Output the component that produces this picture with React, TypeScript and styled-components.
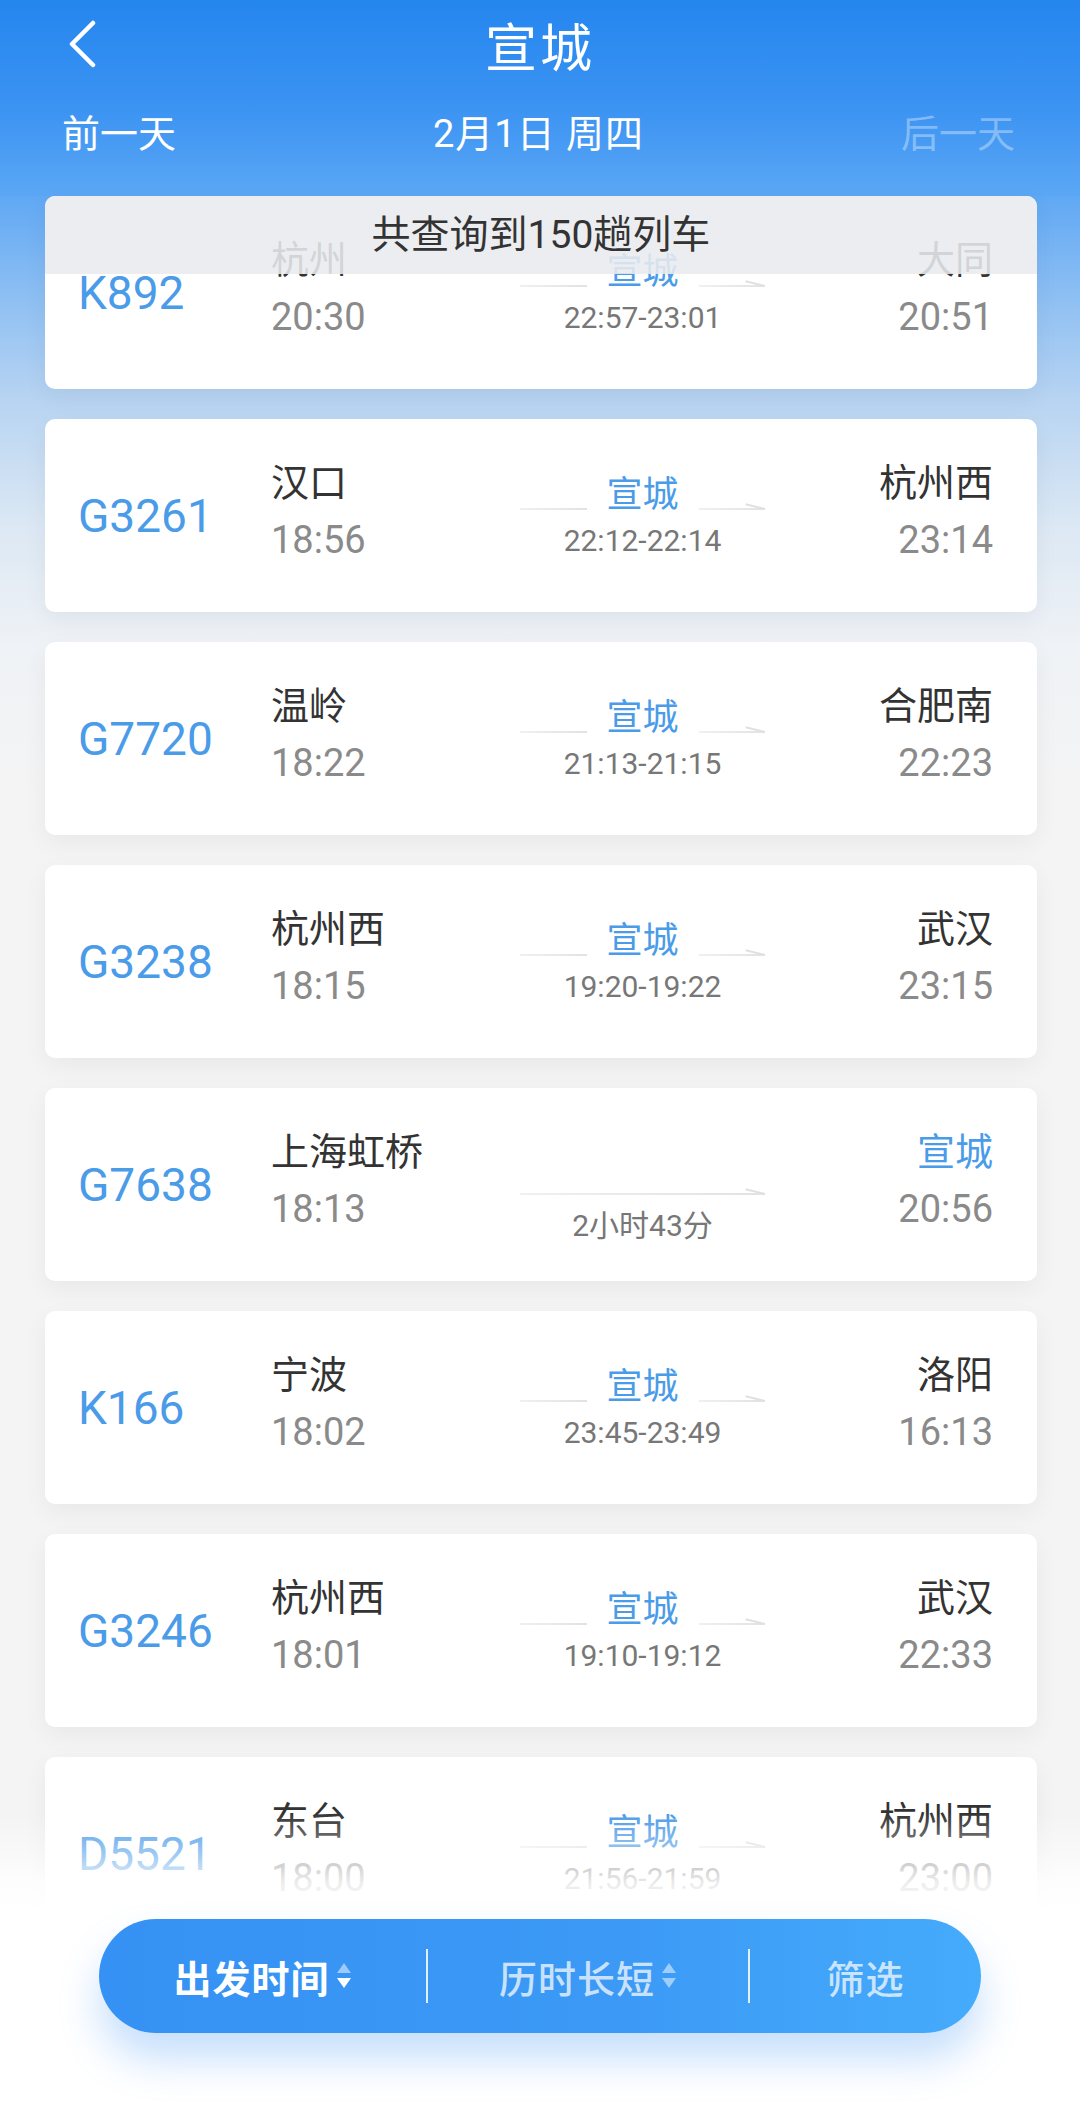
import React from 'react';
import styled, { createGlobalStyle } from 'styled-components';

const GlobalStyle = createGlobalStyle`
  html, body {
    margin: 0;
    padding: 0;
    background: #fff;
  }
  body {
    font-family: Roboto, "Noto Sans CJK SC", sans-serif;
  }
`;

const Page = styled.div`
  position: relative;
  width: 1080px;
  height: 2123px;
  overflow: hidden;
  background: #f4f4f4;
`;

const Header = styled.header`
  height: 196px;
  background: linear-gradient(180deg, #2586ef 0%, #3b93f2 55%, #5ba7f5 100%);
  color: #fff;
`;

const TitleBar = styled.div`
  display: grid;
  grid-template-columns: 1fr auto 1fr;
  align-items: center;
  height: 88px;
`;

const BackButton = styled.button`
  justify-self: start;
  margin-left: 60px;
  width: 44px;
  height: 56px;
  padding: 0;
  border: 0;
  background: none;
  display: flex;
  align-items: center;
  justify-content: center;
`;

const Title = styled.h1`
  margin: 0;
  font-size: 52px;
  font-weight: 400;
  letter-spacing: 3px;
`;

const DateBar = styled.div`
  display: flex;
  justify-content: space-between;
  align-items: center;
  height: 84px;
  padding: 0 65px 0 62px;
  font-size: 38px;
`;

const DayLink = styled.span<{ $disabled?: boolean }>`
  font-weight: 400;
  color: ${(p) => (p.$disabled ? 'rgba(255, 255, 255, 0.35)' : '#fff')};
`;

const CurrentDate = styled.span`
  font-weight: 400;
  letter-spacing: 1px;
`;

const List = styled.main`
  display: flex;
  flex-direction: column;
  gap: 30px;
  height: 1927px;
  padding: 0 43px 0 45px;
  background: linear-gradient(
    180deg,
    #60a8f4 0px,
    #8dbff3 100px,
    #b6d3f2 200px,
    #dce8f4 330px,
    #eff2f6 450px,
    #f4f4f4 600px
  );
`;

const Banner = styled.div`
  position: absolute;
  top: 196px;
  left: 45px;
  width: 992px;
  height: 78px;
  border-radius: 10px 10px 0 0;
  background: rgba(232, 234, 238, 0.88);
  color: #333;
  font-size: 39px;
  line-height: 78px;
  text-align: center;
`;

const Card = styled.article`
  flex: none;
  display: grid;
  grid-template-columns: 193px 249px 245px 1fr;
  height: 193px;
  padding: 0 44px 0 33px;
  background: #fff;
  border-radius: 10px;
  box-shadow: 0 8px 24px rgba(0, 0, 0, 0.05);
`;

const TrainNo = styled.div`
  align-self: center;
  font-size: 46px;
  color: #4a9be8;
`;

const Endpoint = styled.div<{ $right?: boolean }>`
  display: flex;
  flex-direction: column;
  gap: 13px;
  padding-top: 42px;
  text-align: ${(p) => (p.$right ? 'right' : 'left')};
`;

const StationName = styled.div<{ $here?: boolean }>`
  font-size: 38px;
  line-height: 44px;
  color: ${(p) => (p.$here ? '#4a9be8' : '#333')};
`;

const Time = styled.div`
  font-size: 38px;
  line-height: 44px;
  color: #8a8a8a;
`;

const Route = styled.div<{ $direct?: boolean }>`
  display: flex;
  flex-direction: column;
  padding-top: ${(p) => (p.$direct ? 105 : 56)}px;
`;

const Track = styled.div`
  display: flex;
  align-items: flex-end;
`;

const Rail = styled.span<{ $arrow?: boolean }>`
  position: relative;
  flex: 1;
  height: 2px;
  background: linear-gradient(90deg, #f0f0f0, #e2e2e2);

  &::after {
    content: '';
    display: ${(p) => (p.$arrow ? 'block' : 'none')};
    position: absolute;
    right: 0;
    bottom: 0;
    width: 20px;
    height: 2px;
    background: #e0e0e0;
    transform-origin: right center;
    transform: rotate(14deg);
  }
`;

const Stop = styled.span`
  padding: 0 20px;
  margin-bottom: -5px;
  font-size: 36px;
  line-height: 40px;
  color: #4a9be8;
`;

const Span = styled.div`
  margin-top: 13px;
  font-size: 30px;
  line-height: 36px;
  text-align: center;
  color: #777;
`;

const Fade = styled.div`
  position: absolute;
  left: 0;
  right: 0;
  bottom: 0;
  height: 310px;
  pointer-events: none;
  background: linear-gradient(
    180deg,
    rgba(255, 255, 255, 0) 0px,
    rgba(255, 255, 255, 0.45) 40px,
    rgba(255, 255, 255, 0.85) 70px,
    #fff 100px
  );
`;

const SortBar = styled.nav`
  position: absolute;
  left: 99px;
  bottom: 90px;
  width: 882px;
  height: 114px;
  border-radius: 57px;
  background: linear-gradient(90deg, #3591f3 0%, #3c9af6 60%, #45abfb 100%);
  box-shadow: 0 26px 40px rgba(66, 150, 245, 0.3);
  display: grid;
  grid-template-columns: 327px 2px 1fr 2px 231px;
  align-items: center;
`;

const SortItem = styled.button<{ $active?: boolean }>`
  display: flex;
  align-items: center;
  justify-content: center;
  gap: 6px;
  padding: 0;
  border: 0;
  background: none;
  font-family: inherit;
  font-size: 38px;
  font-weight: ${(p) => (p.$active ? 700 : 500)};
  letter-spacing: 1px;
  color: ${(p) => (p.$active ? '#fff' : 'rgba(255, 255, 255, 0.72)')};
`;

const Divider = styled.span`
  width: 2px;
  height: 54px;
  background: rgba(255, 255, 255, 0.85);
`;

type Train = {
  no: string;
  from: string;
  dep: string;
  stop?: string;
  span: string;
  to: string;
  arr: string;
  toHere?: boolean;
};

const trains: Train[] = [
  { no: 'K892', from: '杭州', dep: '20:30', stop: '宣城', span: '22:57-23:01', to: '大同', arr: '20:51' },
  { no: 'G3261', from: '汉口', dep: '18:56', stop: '宣城', span: '22:12-22:14', to: '杭州西', arr: '23:14' },
  { no: 'G7720', from: '温岭', dep: '18:22', stop: '宣城', span: '21:13-21:15', to: '合肥南', arr: '22:23' },
  { no: 'G3238', from: '杭州西', dep: '18:15', stop: '宣城', span: '19:20-19:22', to: '武汉', arr: '23:15' },
  { no: 'G7638', from: '上海虹桥', dep: '18:13', span: '2小时43分', to: '宣城', arr: '20:56', toHere: true },
  { no: 'K166', from: '宁波', dep: '18:02', stop: '宣城', span: '23:45-23:49', to: '洛阳', arr: '16:13' },
  { no: 'G3246', from: '杭州西', dep: '18:01', stop: '宣城', span: '19:10-19:12', to: '武汉', arr: '22:33' },
  { no: 'D5521', from: '东台', dep: '18:00', stop: '宣城', span: '21:56-21:59', to: '杭州西', arr: '23:00' },
];

const SortArrows = ({ active }: { active?: boolean }) => (
  <svg width="16" height="34" viewBox="0 0 16 34">
    <path d="M1 14 L8 4 L15 14 Z" fill="rgba(255,255,255,0.5)" />
    <path d="M1 19 L15 19 L8 29 Z" fill={active ? '#fff' : 'rgba(255,255,255,0.5)'} />
  </svg>
);

const TrainCard = ({ t }: { t: Train }) => (
  <Card>
    <TrainNo>{t.no}</TrainNo>
    <Endpoint>
      <StationName>{t.from}</StationName>
      <Time>{t.dep}</Time>
    </Endpoint>
    <Route $direct={!t.stop}>
      <Track>
        {t.stop ? (
          <>
            <Rail />
            <Stop>{t.stop}</Stop>
            <Rail $arrow />
          </>
        ) : (
          <Rail $arrow />
        )}
      </Track>
      <Span>{t.span}</Span>
    </Route>
    <Endpoint $right>
      <StationName $here={t.toHere}>{t.to}</StationName>
      <Time>{t.arr}</Time>
    </Endpoint>
  </Card>
);

export default function App() {
  return (
    <Page>
      <GlobalStyle />
      <Header>
        <TitleBar>
          <BackButton aria-label="返回">
            <svg width="32" height="48" viewBox="0 0 32 48">
              <path
                d="M27 3 L6 24 L27 45"
                fill="none"
                stroke="#fff"
                strokeWidth="4.5"
                strokeLinecap="round"
                strokeLinejoin="round"
              />
            </svg>
          </BackButton>
          <Title>宣城</Title>
        </TitleBar>
        <DateBar>
          <DayLink>前一天</DayLink>
          <CurrentDate>2月1日 周四</CurrentDate>
          <DayLink $disabled>后一天</DayLink>
        </DateBar>
      </Header>

      <List>
        {trains.map((t) => (
          <TrainCard key={t.no} t={t} />
        ))}
      </List>

      <Banner>共查询到150趟列车</Banner>
      <Fade />

      <SortBar>
        <SortItem $active>
          出发时间
          <SortArrows active />
        </SortItem>
        <Divider />
        <SortItem>
          历时长短
          <SortArrows />
        </SortItem>
        <Divider />
        <SortItem>筛选</SortItem>
      </SortBar>
    </Page>
  );
}
